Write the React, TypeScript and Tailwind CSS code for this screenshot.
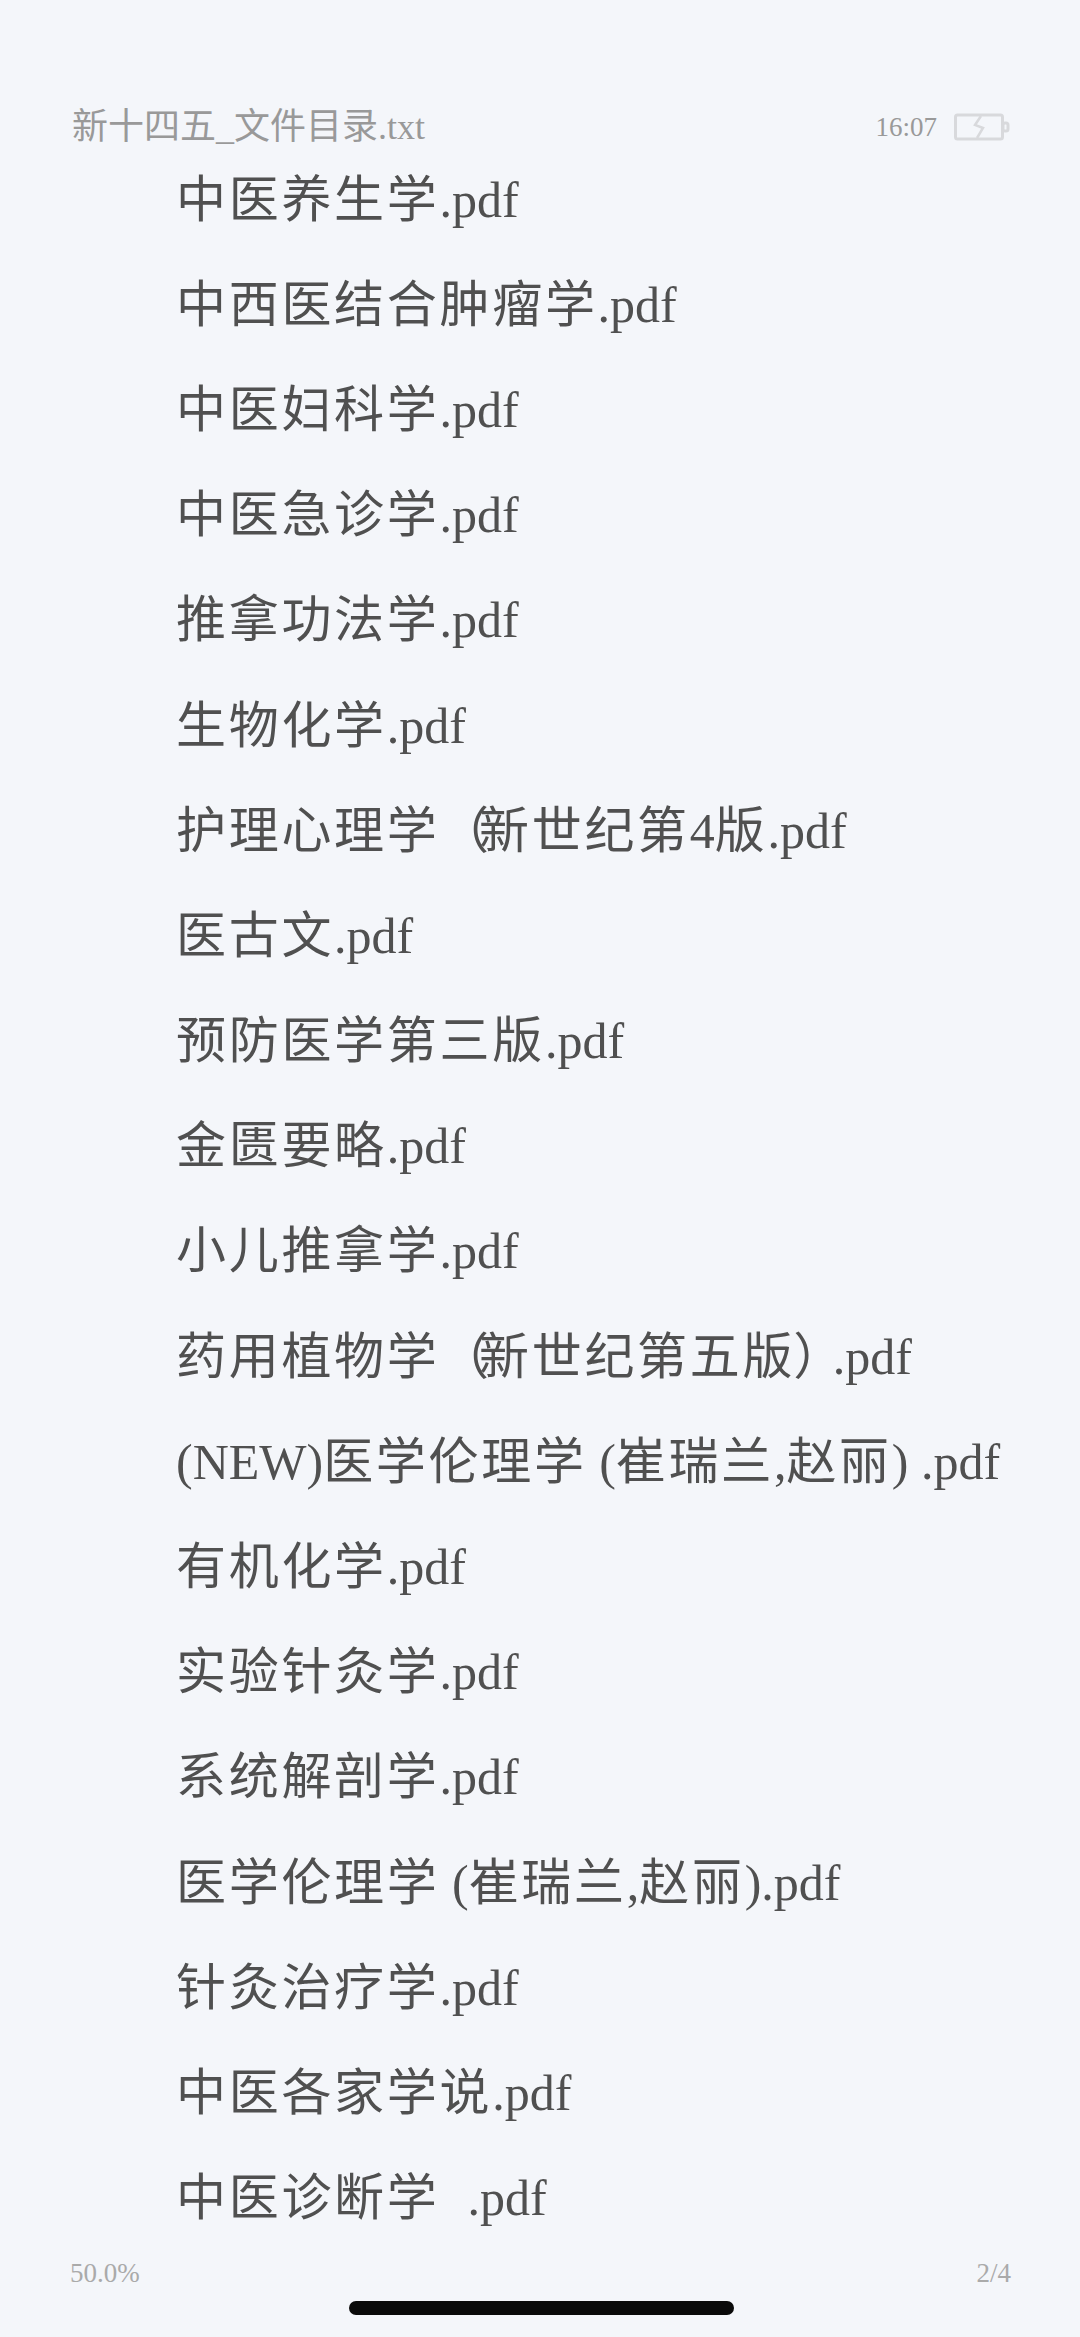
const rows = [
  '中医养生学.pdf',
  '中西医结合肿瘤学.pdf',
  '中医妇科学.pdf',
  '中医急诊学.pdf',
  '推拿功法学.pdf',
  '生物化学.pdf',
  '护理心理学  （新世纪第4版.pdf',
  '医古文.pdf',
  '预防医学第三版.pdf',
  '金匮要略.pdf',
  '小儿推拿学.pdf',
  '药用植物学  （新世纪第五版） .pdf',
  '(NEW)医学伦理学 (崔瑞兰,赵丽) .pdf',
  '有机化学.pdf',
  '实验针灸学.pdf',
  '系统解剖学.pdf',
  '医学伦理学 (崔瑞兰,赵丽).pdf',
  '针灸治疗学.pdf',
  '中医各家学说.pdf',
  '中医诊断学  .pdf',
];

// CJK runs are spaced out by the reader, latin runs are not
function Part({ part }: { part: string }) {
  if (part === '（') {
    // reader squeezes this bracket into the next glyph
    return <span className="ml-[-28.5px] mr-[-10px]">（</span>;
  }
  if (part === '）') {
    return <span className="ml-[-2px] mr-[-23px]">）</span>;
  }
  if (/[\u4e00-\u9fff]/.test(part)) {
    return <span className="tracking-[2.7px]">{part}</span>;
  }
  if (part.startsWith('  ')) {
    return <span className="pl-[3px]">{part}</span>;
  }
  return <span>{part}</span>;
}

function Row({ text }: { text: string }) {
  const parts = text.match(/[（）]|[\u4e00-\u9fff]+|[^\u4e00-\u9fff（）]+/g) ?? [];
  return (
    <div className="h-[105.2px] flex items-center whitespace-pre text-[50px] leading-none text-[#505050]">
      {parts.map((part, i) => (
        <Part key={i} part={part} />
      ))}
    </div>
  );
}

function Battery() {
  return (
    <svg width="56" height="28" viewBox="0 0 56 28" fill="none" stroke="#d8d9dc" strokeWidth="3">
      <rect x="1.5" y="2" width="47" height="24" rx="2" />
      <rect x="49" y="10" width="5" height="8" rx="2" />
      <path d="M27 3 L21 12 L29 15 L23 25" strokeWidth="2.5" />
    </svg>
  );
}

export default function App() {
  return (
    <div className="relative h-[2337px] w-full overflow-hidden bg-[#f4f6fa] font-['Liberation_Serif','Noto_Sans_CJK_SC',serif]">
      {/* status line */}
      <div className="flex items-center justify-between pt-[107px] pl-[72px] pr-[70px] h-[147px]">
        <span className="text-[36px] leading-none text-[#999999]">新十四五_文件目录.txt</span>
        <div className="flex items-center gap-[17px]">
          <span className="text-[27px] leading-none text-[#999999]">16:07</span>
          <Battery />
        </div>
      </div>

      <div className="flex flex-col pl-[176px]">
        {rows.map((r) => (
          <Row key={r} text={r} />
        ))}
      </div>

      <div className="flex items-center justify-between pt-[9px] pl-[70px] pr-[69px] text-[27px] leading-none text-[#aaaaaa]">
        <span>50.0%</span>
        <span>2/4</span>
      </div>
      <div className="absolute bottom-[22px] left-[349px] h-[14px] w-[385px] rounded-full bg-[#0a0a0a]" />
    </div>
  );
}
